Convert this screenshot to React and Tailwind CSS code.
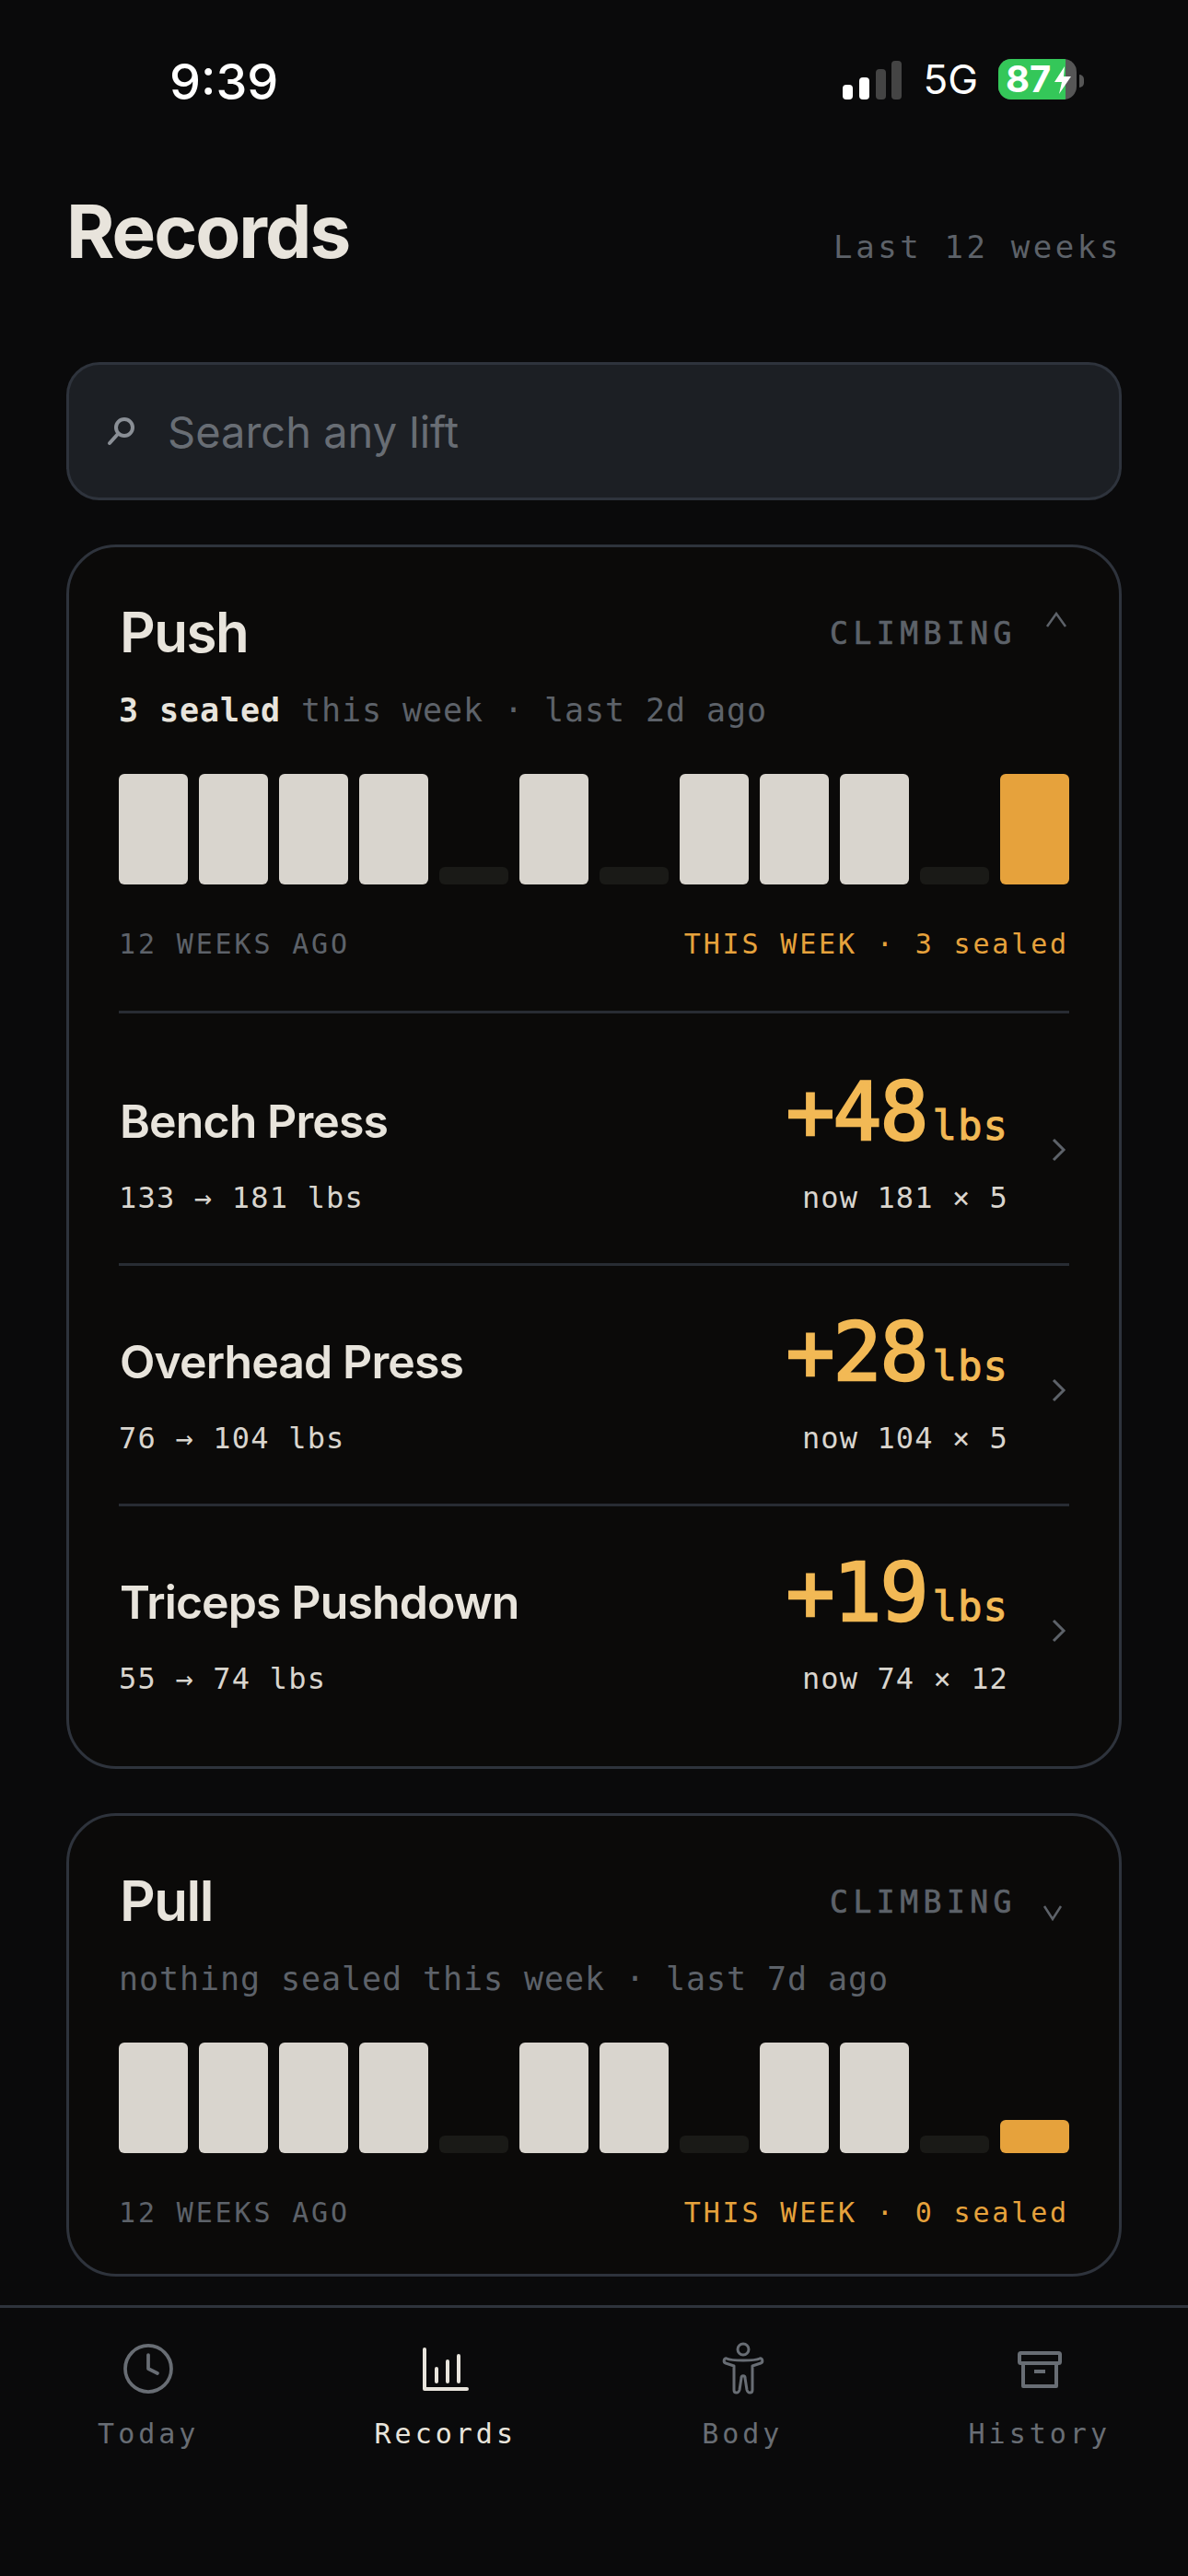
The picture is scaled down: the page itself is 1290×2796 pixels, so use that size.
import { Clock } from 'lucide-react'

const pushBars = [1, 1, 1, 1, 0, 1, 0, 1, 1, 1, 0, 2]
const pullBars = [1, 1, 1, 1, 0, 1, 1, 0, 1, 1, 0, 3]

const pushLifts = [
  { name: 'Bench Press', range: '133 → 181 lbs', gain: '+48', now: 'now 181 × 5' },
  { name: 'Overhead Press', range: '76 → 104 lbs', gain: '+28', now: 'now 104 × 5' },
  { name: 'Triceps Pushdown', range: '55 → 74 lbs', gain: '+19', now: 'now 74 × 12' },
]

const mono = "font-['DejaVu_Sans_Mono',monospace]"

function StatusBar() {
  return (
    <div className="flex h-[172px] shrink-0 items-start justify-between pl-[184px] pr-[113px] pt-[61px]">
      <span className="text-[54px] font-medium leading-[56px] text-white">9:39</span>
      <div className="flex h-[47px] items-end">
        <svg width="64" height="42" viewBox="0 0 64 42">
          <rect x="0" y="26" width="11" height="16" rx="4" fill="#fff" />
          <rect x="18" y="18" width="11" height="24" rx="4" fill="#fff" />
          <rect x="36" y="9" width="11" height="33" rx="4" fill="#444" />
          <rect x="53" y="0" width="11" height="42" rx="4" fill="#444" />
        </svg>
        <span className="ml-[23px] text-[44px] leading-[44px] text-white">5G</span>
        <div className="relative ml-[22px] h-[44px] w-[85px]">
          <div className="flex h-full overflow-hidden rounded-[14px] bg-[#565656]">
            <div className="h-full w-[73px] bg-[#34c759]" />
          </div>
          <span className="absolute left-[8px] top-[0px] text-[40px] font-bold leading-[44px] text-white">87</span>
          <svg width="20" height="30" viewBox="0 0 20 30" className="absolute left-[60px] top-[8px]">
            <path d="M12 0 L1 17 H9 L6 30 L19 11 H11 Z" fill="#fff" />
          </svg>
        </div>
        <div className="mb-[13px] ml-[3px] h-[14px] w-[5px] rounded-r-full bg-[#565656]" />
      </div>
    </div>
  )
}

function SearchGlyph() {
  return (
    <svg width="32" height="32" viewBox="0 0 32 32" fill="none" stroke="#8a8f96" strokeWidth="4" strokeLinecap="round" className="ml-[1px]">
      <circle cx="19" cy="12" r="9" />
      <path d="M12 19 L3 29" />
    </svg>
  )
}

function Caret({ up }) {
  return (
    <svg width="24" height="18" viewBox="0 0 24 18" fill="none" stroke="#5d6269" strokeWidth="2.5" className={up ? 'ml-[31px] mr-[2px] mt-[8px]' : 'ml-[28px] mr-[5px] mt-[34px]'}>
      <path d={up ? 'M2 16 L12 2 L22 16' : 'M2 2 L11 16 L20 2'} />
    </svg>
  )
}

function WeekBars({ bars }) {
  return (
    <div className="mt-[51px] grid h-[120px] grid-cols-12 items-end gap-[12px]">
      {bars.map((kind, index) => {
        if (kind === 0) return <div key={index} className="h-[19px] rounded-[6px] bg-[#1a1a17]" />
        if (kind === 1) return <div key={index} className="h-[120px] rounded-[6px] bg-[#d9d5ce]" />
        if (kind === 2) return <div key={index} className="h-[120px] rounded-[6px] bg-[#e6a23c]" />
        return <div key={index} className="h-[36px] rounded-[6px] bg-[#e6a23c]" />
      })}
    </div>
  )
}

function GroupHead({ title, up, sub, bars, sealed }) {
  return (
    <>
      <div className="flex items-start justify-between">
        <h2 className="ml-[1px] text-[60px] font-semibold leading-[60px] tracking-[-1.5px] text-[#e8e4dc]">{title}</h2>
        <div className="flex items-start">
          <span className={`${mono} mt-[15px] text-[33px] leading-[33px] tracking-[5.5px] text-[#5d6269] [-webkit-text-stroke:0.7px_#5d6269]`}>CLIMBING</span>
          <Caret up={up} />
        </div>
      </div>
      <p className={`${mono} mt-[37px] text-[35px] leading-[36px] tracking-[0.93px] text-[#5d6269]`}>{sub}</p>
      <WeekBars bars={bars} />
      <div className={`${mono} mt-[50px] flex justify-between text-[30px] leading-[30px] tracking-[2.85px]`}>
        <span className="text-[#5d6269]">12 WEEKS AGO</span>
        <span className="text-[#e6a23c]">THIS WEEK · {sealed} sealed</span>
      </div>
    </>
  )
}

function LiftRow({ lift, first }) {
  return (
    <div className={`flex items-center border-t-[3px] border-[#282c33] pb-[55px] ${first ? 'pt-[65px]' : 'pt-[52px]'}`}>
      <div className="flex flex-1 items-end">
        <div className="flex flex-1 flex-col">
          <span className="ml-[1px] text-[50px] font-semibold leading-[50px] tracking-[-0.9px] text-[#e8e4dc]">{lift.name}</span>
          <span className={`${mono} mt-[42px] text-[32px] leading-[32px] tracking-[1.2px] text-[#d9d5ce]`}>{lift.range}</span>
        </div>
        <div className="flex flex-col items-end">
          <div className={`${mono} flex h-[84px] items-baseline text-[#f2b955]`}>
            <span className="text-[88px] leading-[84px] tracking-[-2px] [-webkit-text-stroke:2.5px_#f2b955]">{lift.gain}</span>
            <span className="ml-[6px] text-[44px] leading-[44px] tracking-[1px] [-webkit-text-stroke:1px_#f2b955]">lbs</span>
          </div>
          <span className={`${mono} mt-[35px] text-[32px] leading-[32px] tracking-[1.1px] text-[#d9d5ce]`}>{lift.now}</span>
        </div>
      </div>
      <svg width="22" height="26" viewBox="0 0 22 26" fill="none" stroke="#5d6269" strokeWidth="3" className="ml-[44px] mt-[14px]">
        <path d="M5 2 L16 13 L5 24" />
      </svg>
    </div>
  )
}

function RecordsIcon() {
  return (
    <svg width="60" height="60" viewBox="0 0 60 60" fill="none" stroke="#e8e4dc" strokeWidth="4" strokeLinecap="round" strokeLinejoin="round">
      <path d="M7 9 V52 H53" />
      <path d="M20 30 V44 M32 22 V44 M44 16 V44" />
    </svg>
  )
}

function BodyIcon() {
  return (
    <svg width="60" height="60" viewBox="0 0 60 60" fill="none" stroke="#686d74" strokeWidth="3" strokeLinejoin="round">
      <circle cx="31" cy="9" r="6" />
      <path d="M13 19 C17 21 24 21 31 21 C38 21 45 21 49 19 C52 18 53 23 50 24 L41 27 V53 C41 57 36 57 35 53 L33 40 C33 37 29 37 29 40 L27 53 C26 57 21 57 21 53 V27 L12 24 C9 23 10 18 13 19 Z" />
    </svg>
  )
}

function ArchiveIcon() {
  return (
    <svg width="60" height="60" viewBox="0 0 60 60" fill="none" stroke="#686d74" strokeWidth="4" strokeLinejoin="round">
      <rect x="8" y="13" width="44" height="11" rx="1.5" />
      <path d="M12 24 V49 H48 V24" />
      <path d="M24 33 H36" />
    </svg>
  )
}

function NavItem({ label, active, children }) {
  return (
    <div className="flex flex-col items-center">
      <div className="flex h-[60px] w-[60px] items-center justify-center">{children}</div>
      <span className={`${mono} mt-[26px] text-[30px] leading-[30px] tracking-[4px] ${active ? 'text-[#e8e4dc]' : 'text-[#686d74]'}`}>{label}</span>
    </div>
  )
}

export default function App() {
  return (
    <div className="flex h-[2796px] w-[1290px] flex-col overflow-hidden bg-[#0a0a0b] font-['Inter',sans-serif]">
      <StatusBar />
      <main className="min-h-0 flex-1 px-[72px] pt-[41px]">
        <div className="flex h-[76px] items-baseline justify-between">
          <h1 className="text-[80px] font-bold leading-[76px] tracking-[-2px] text-[#e8e4dc]">Records</h1>
          <span className={`${mono} text-[34px] leading-[34px] tracking-[3.6px] text-[#5d6269]`}>Last 12 weeks</span>
        </div>

        <div className="mt-[104px] flex h-[150px] items-center rounded-[36px] border-[3px] border-[#2e333c] bg-[#1c1f24] pl-[40px]">
          <SearchGlyph />
          <span className="ml-[34px] pt-[2px] text-[47px] text-[#686d74]">Search any lift</span>
        </div>

        <section className="mt-[48px] rounded-[54px] border-[3px] border-[#2e333c] bg-[#0b0a09] px-[54px] pt-[62px] pb-[24px]">
          <GroupHead
            title="Push"
            up
            sub={<><span className="font-bold text-[#e8e4dc]">3 sealed</span> this week · last 2d ago</>}
            bars={pushBars}
            sealed={3}
          />
          <div className="mt-[57px]">
            {pushLifts.map((lift, index) => (
              <LiftRow key={lift.name} lift={lift} first={index === 0} />
            ))}
          </div>
        </section>

        <section className="mt-[48px] rounded-[54px] border-[3px] border-[#2e333c] bg-[#0b0a09] px-[54px] pt-[62px] pb-[51px]">
          <GroupHead title="Pull" sub="nothing sealed this week · last 7d ago" bars={pullBars} sealed={0} />
        </section>
      </main>

      <nav className="grid h-[294px] shrink-0 grid-cols-4 border-t-[3px] border-[#2e333c] pt-[36px]">
        <NavItem label="Today">
          <Clock size={60} strokeWidth={1.5} color="#686d74" />
        </NavItem>
        <NavItem label="Records" active>
          <RecordsIcon />
        </NavItem>
        <NavItem label="Body">
          <BodyIcon />
        </NavItem>
        <NavItem label="History">
          <ArchiveIcon />
        </NavItem>
      </nav>
    </div>
  )
}
